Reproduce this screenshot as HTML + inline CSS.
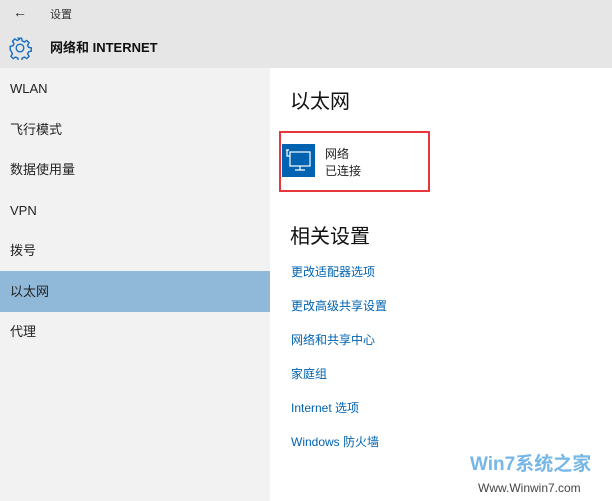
<!DOCTYPE html>
<html><head><meta charset="utf-8"><style>
*{margin:0;padding:0;box-sizing:border-box}
body{width:612px;height:501px;overflow:hidden;background:#fff;font-family:"Liberation Sans","Noto Sans CJK SC",sans-serif;color:#000;position:relative}
div{line-height:16px}
.hdr{position:absolute;left:0;top:0;width:612px;height:68px;background:#e6e6e6}
.side{position:absolute;left:0;top:68px;width:270px;height:433px;background:#f2f2f2}
.it{position:absolute;left:10px;font-size:13px;color:#222}
.sel{position:absolute;left:0;top:271px;width:270px;height:41px;background:#90b8d9}
.a{position:absolute;left:291px;font-size:12px;color:#0063b1}
</style></head><body>
<div class="hdr"></div>
<div style="position:absolute;left:13px;top:4px;font-size:14px;color:#222">←</div>
<div style="position:absolute;left:50px;top:7px;font-size:11px;color:#333">设置</div>
<svg style="position:absolute;left:8px;top:36px" width="24" height="24" viewBox="0 0 22 22"><g fill="none" stroke="#1a6fc0" stroke-width="1.3"><circle cx="11" cy="11" r="3.5"/><path d="M9.5 2h3l.5 2.5 2 1 2.2-1.4 2.1 2.1-1.4 2.2 1 2 2.5.5v3l-2.5.5-1 2 1.4 2.2-2.1 2.1-2.2-1.4-2 1-.5 2.5h-3l-.5-2.5-2-1-2.2 1.4-2.1-2.1 1.4-2.2-1-2L2 12.5v-3l2.5-.5 1-2-1.4-2.2 2.1-2.1 2.2 1.4 2-1z"/></g></svg>
<div style="position:absolute;left:50px;top:40px;font-size:13px;font-weight:bold;color:#111">网络和 INTERNET</div>
<div class="side"></div>
<div class="sel"></div>
<div class="it" style="top:81px">WLAN</div>
<div class="it" style="top:122px">飞行模式</div>
<div class="it" style="top:162px">数据使用量</div>
<div class="it" style="top:203px">VPN</div>
<div class="it" style="top:243px">拨号</div>
<div class="it" style="top:284px">以太网</div>
<div class="it" style="top:324px">代理</div>
<div style="position:absolute;left:290px;top:91px;font-size:20px;line-height:22px;color:#111">以太网</div>
<div style="position:absolute;left:279px;top:131px;width:151px;height:61px;border:2px solid #e8363c"></div>
<div style="position:absolute;left:282px;top:144px;width:33px;height:33px;background:#0063b1"></div>
<svg style="position:absolute;left:282px;top:144px" width="33" height="33"><g fill="none" stroke="#fff" stroke-width="1.2"><rect x="8" y="8" width="20" height="14"/><path d="M18 22v4M13 26h10M5 6v6h3M4 6h3"/></g></svg>
<div style="position:absolute;left:325px;top:146px;font-size:12px;color:#222">网络</div>
<div style="position:absolute;left:325px;top:163px;font-size:12px;color:#222">已连接</div>
<div style="position:absolute;left:290px;top:226px;font-size:20px;line-height:22px;color:#111">相关设置</div>
<div class="a" style="top:264px">更改适配器选项</div>
<div class="a" style="top:298px">更改高级共享设置</div>
<div class="a" style="top:332px">网络和共享中心</div>
<div class="a" style="top:366px">家庭组</div>
<div class="a" style="top:400px">Internet 选项</div>
<div class="a" style="top:434px">Windows 防火墙</div>
<div style="position:absolute;left:470px;top:454px;font-size:19px;line-height:22px;font-weight:bold;color:#4aa0e0;opacity:.75">Win7系统之家</div>
<div style="position:absolute;left:478px;top:480px;font-size:12px;color:#444">Www.Winwin7.com</div>
</body></html>
